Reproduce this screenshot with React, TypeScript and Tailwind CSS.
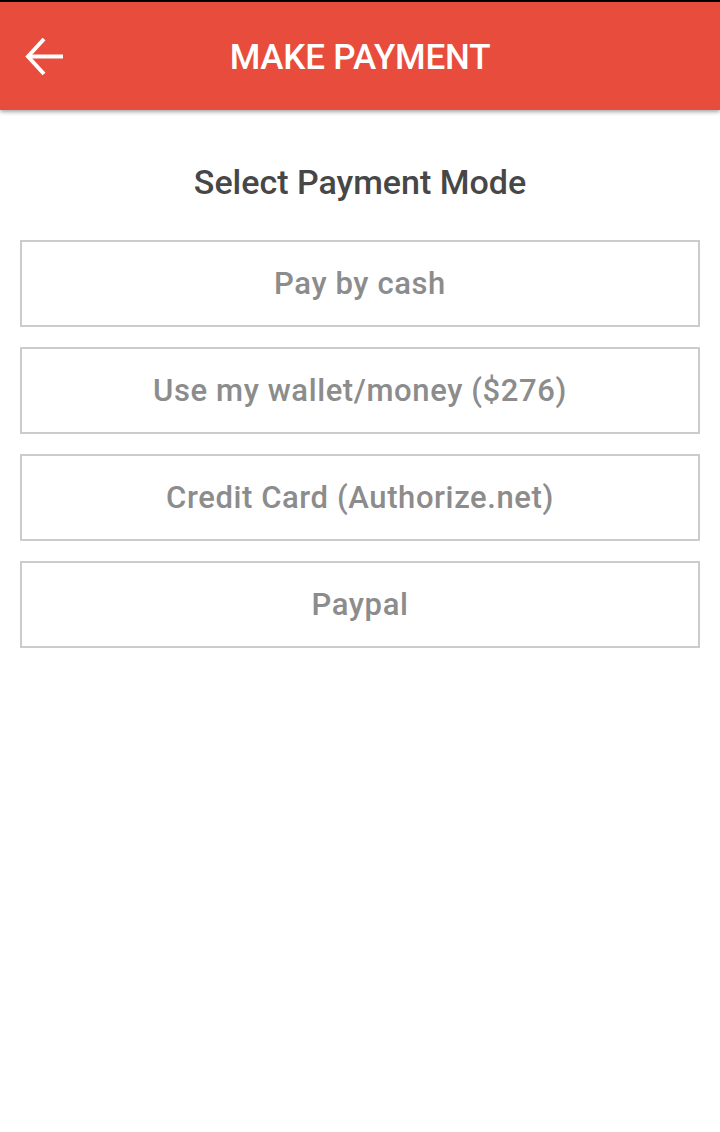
import React from 'react';

const modes = ['Pay by cash', 'Use my wallet/money ($276)', 'Credit Card (Authorize.net)', 'Paypal'];

export default function App() {
  return (
    <div className="min-h-[1132px] bg-white" style={{ fontFamily: 'Roboto, sans-serif' }}>
      <div className="h-[2px] bg-black" />
      <div className="relative flex h-[108px] items-center justify-center bg-[#e74c3c] shadow-[0_2px_4px_rgba(0,0,0,0.35)]">
        <button className="absolute left-[24px] top-[34px] flex h-[40px] w-[40px] items-center justify-center">
          <svg width="40" height="40" viewBox="0 0 40 40" fill="none" stroke="white" strokeWidth="4" strokeLinecap="butt" strokeLinejoin="miter">
            <path d="M20 3 L4 20.5 L20 38" />
            <path d="M4 20.5 H39" />
          </svg>
        </button>
        <h1 className="pt-[4px] text-[35px] font-medium tracking-[-0.2px] text-white">MAKE PAYMENT</h1>
      </div>
      <div className="px-[20px]">
        <h2 className="mt-[52px] text-center text-[34px] leading-[40px] font-medium text-[#474747]">Select Payment Mode</h2>
        <div className="mt-[38px] flex flex-col gap-[20px]">
          {modes.map((m) => (
            <button
              key={m}
              className="flex h-[87px] w-full items-center justify-center border-2 border-[#cccccc] bg-white pt-[2px] text-[31px] tracking-[0.6px] font-medium text-[#8c8c8c]"
            >
              {m}
            </button>
          ))}
        </div>
      </div>
    </div>
  );
}
